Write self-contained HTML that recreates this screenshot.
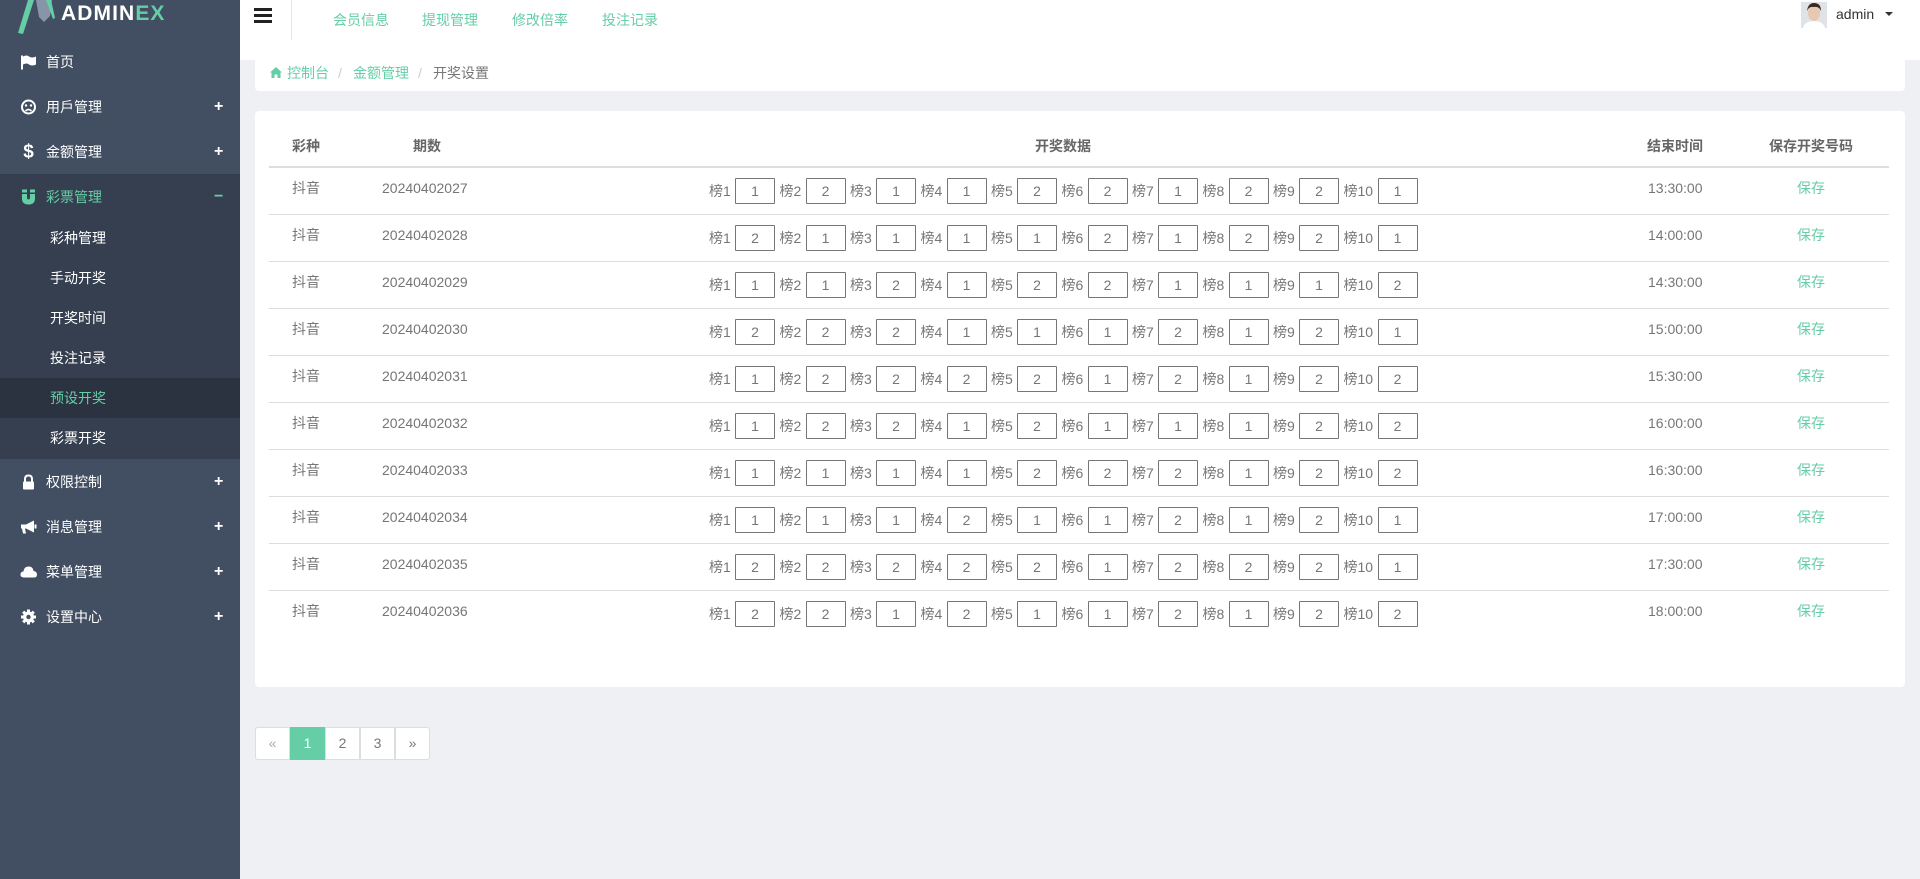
<!DOCTYPE html>
<html><head><meta charset="utf-8">
<style>
*{margin:0;padding:0;box-sizing:border-box}
body{width:1920px;height:879px;overflow:hidden;background:#eff0f4;font-family:"Liberation Sans","Noto Sans CJK SC",sans-serif;font-size:14px;color:#767676;position:relative}
.abs{position:absolute}
#side{left:0;top:0;width:240px;height:879px;background:#424f63}
.mi{position:absolute;left:0;width:240px;height:45px;color:#fff;font-size:14px}
.mi .t{position:absolute;left:46px;top:50%;transform:translateY(-50%);line-height:16px}
.mi .ic{position:absolute;left:20px;top:50%;transform:translateY(-50%);width:17px;height:17px}
.mi .pl{position:absolute;left:214px;top:50%;transform:translateY(-50%);font-weight:bold;font-size:16px}
.si{position:absolute;left:0;width:240px;height:40px;color:#fff;font-size:14px}
.si span{position:absolute;left:50px;top:50%;transform:translateY(-50%)}
.cell{position:absolute;transform:translateY(-50%);white-space:nowrap}
.lb{position:absolute;transform:translateY(-50%);font-size:14px;color:#767676}
.ip{position:absolute;width:40px;height:26px;border:1px solid #767676;background:#fff;text-align:center;line-height:24px;font-size:14px;color:#767676;border-radius:1px}
.hl{position:absolute;left:269px;width:1620px;height:1px;background:#ddd}
.pg{position:absolute;top:727px;width:35px;height:33px;border:1px solid #ddd;background:#fff;text-align:center;line-height:31px;font-size:14px;color:#777}
</style></head><body>
<div id="side" class="abs"></div>
<svg class="abs" style="left:0;top:0" width="240" height="40">
<polygon points="18,33 23,34 34,0 28,0" fill="#65cea7"/>
<polygon points="36,0 52,0 50,16 44,22 39,17" fill="#8894a8"/>
<polygon points="46,0 51,0 55,18 53,19" fill="#65cea7"/>
</svg>
<div class="abs" style="left:61px;top:1px;font-size:21px;font-weight:bold;letter-spacing:1.1px;color:#fff;line-height:26px">ADMIN<span style="color:#65cea7">EX</span></div>

<div class="mi" style="top:39px"><svg class="ic" viewBox="0 0 17 17"><rect x="1" y="2" width="2" height="14" fill="#fff"/><path d="M3 3 Q7 1 9 3 Q12 5 16 3 V11 Q12 13 9 11 Q7 9 3 11Z" fill="#fff"/></svg><span class="t">首页</span></div>
<div class="mi" style="top:84px"><svg class="ic" viewBox="0 0 17 17"><circle cx="8.5" cy="8.5" r="6.5" fill="none" stroke="#fff" stroke-width="2"/><circle cx="6" cy="7" r="1.2" fill="#fff"/><circle cx="11" cy="7" r="1.2" fill="#fff"/><path d="M5.5 12.5 Q8.5 9.5 11.5 12.5" stroke="#fff" stroke-width="1.6" fill="none"/></svg><span class="t">用戶管理</span><span class="pl">+</span></div>
<div class="mi" style="top:129px"><span class="ic" style="font-weight:bold;font-size:19px;line-height:17px;text-align:center">$</span><span class="t">金额管理</span><span class="pl">+</span></div>
<div class="abs" style="left:0;top:174px;width:240px;height:285px;background:#353f4f"></div>
<div class="mi" style="top:174px;color:#65cea7"><svg class="ic" viewBox="0 0 17 17"><path d="M2 1 H7 V9 Q7 11 8.5 11 Q10 11 10 9 V1 H15 V10 Q15 16 8.5 16 Q2 16 2 10Z" fill="#65cea7"/><rect x="2" y="4" width="5" height="1.5" fill="#353f4f"/><rect x="10" y="4" width="5" height="1.5" fill="#353f4f"/></svg><span class="t">彩票管理</span><span class="pl">−</span></div>
<div class="si" style="top:218px"><span>彩种管理</span></div>
<div class="si" style="top:258px"><span>手动开奖</span></div>
<div class="si" style="top:298px"><span>开奖时间</span></div>
<div class="si" style="top:338px"><span>投注记录</span></div>
<div class="si" style="top:378px;background:#2b3340;color:#65cea7"><span>预设开奖</span></div>
<div class="si" style="top:418px"><span>彩票开奖</span></div>
<div class="mi" style="top:459px"><svg class="ic" viewBox="0 0 17 17"><path d="M5 8 V5.5 Q5 2 8.5 2 Q12 2 12 5.5 V8" stroke="#fff" stroke-width="2" fill="none"/><rect x="3" y="8" width="11" height="8" rx="1" fill="#fff"/></svg><span class="t">权限控制</span><span class="pl">+</span></div>
<div class="mi" style="top:504px"><svg class="ic" viewBox="0 0 17 17"><path d="M1 6 H6 L14 2 V14 L6 10 H5 L6 15 H3 L2 10 H1Z" fill="#fff"/><rect x="14.5" y="6" width="2" height="4" fill="#fff"/></svg><span class="t">消息管理</span><span class="pl">+</span></div>
<div class="mi" style="top:549px"><svg class="ic" viewBox="0 0 17 17"><path d="M4 14 Q0 14 0.5 10.5 Q1 8 3.5 8 Q4 3 8.5 3 Q13 3 13.5 7.5 Q17 8 17 11 Q17 14 14 14Z" fill="#fff"/></svg><span class="t">菜单管理</span><span class="pl">+</span></div>
<div class="mi" style="top:594px"><svg class="ic" viewBox="0 0 17 17"><circle cx="8.5" cy="8.5" r="5.5" fill="#fff"/><g stroke="#fff" stroke-width="3"><line x1="8.5" y1="1" x2="8.5" y2="16"/><line x1="1" y1="8.5" x2="16" y2="8.5"/><line x1="3.2" y1="3.2" x2="13.8" y2="13.8"/><line x1="13.8" y1="3.2" x2="3.2" y2="13.8"/></g><circle cx="8.5" cy="8.5" r="2.2" fill="#424f63"/></svg><span class="t">设置中心</span><span class="pl">+</span></div>

<div class="abs" style="left:240px;top:0;width:1680px;height:60px;background:#fff"></div>
<div class="abs" style="left:254px;top:8px;width:18px;height:3px;background:#222"></div>
<div class="abs" style="left:254px;top:14px;width:18px;height:3px;background:#222"></div>
<div class="abs" style="left:254px;top:20px;width:18px;height:3px;background:#222"></div>
<div class="abs" style="left:291px;top:0;width:1px;height:40px;background:#e6e6e6"></div>
<div class="cell" style="left:333px;top:20px;color:#65cea7">会员信息</div>
<div class="cell" style="left:422px;top:20px;color:#65cea7">提现管理</div>
<div class="cell" style="left:512px;top:20px;color:#65cea7">修改倍率</div>
<div class="cell" style="left:602px;top:20px;color:#65cea7">投注记录</div>
<svg class="abs" style="left:1801px;top:2px" width="26" height="26"><rect width="26" height="26" fill="#dfe3e8"/><ellipse cx="13" cy="11" rx="6" ry="8" fill="#e8c8b0"/><path d="M6 9 Q7 1 13 1 Q20 1 20 9 Q18 4 13 5 Q8 4 6 9Z" fill="#3a2a20"/><path d="M2 26 Q4 19 13 19 Q22 19 24 26Z" fill="#fff"/></svg>
<div class="cell" style="left:1836px;top:14px;color:#333">admin</div>
<svg class="abs" style="left:1885px;top:12px" width="8" height="5"><polygon points="0,0 8,0 4,4" fill="#333"/></svg>

<div class="abs" style="left:255px;top:60px;width:1650px;height:31px;background:#fff;border-radius:0 0 4px 4px"></div>
<svg class="abs" style="left:270px;top:67px" width="12" height="11" viewBox="0 0 12 11"><path d="M6 0 L12 5.5 H10.5 V11 H7.5 V7.5 H4.5 V11 H1.5 V5.5 H0Z" fill="#65cea7"/></svg>
<div class="cell" style="left:287px;top:73px;color:#65cea7">控制台</div>
<div class="cell" style="left:338px;top:73px;color:#ccc">/</div>
<div class="cell" style="left:353px;top:73px;color:#65cea7">金额管理</div>
<div class="cell" style="left:418px;top:73px;color:#ccc">/</div>
<div class="cell" style="left:433px;top:73px;color:#777">开奖设置</div>

<div class="abs" style="left:255px;top:111px;width:1650px;height:576px;background:#fff;border-radius:4px"></div>
<div class="cell" style="left:292px;top:146px;font-weight:bold;color:#666">彩种</div>
<div class="cell" style="left:413px;top:146px;font-weight:bold;color:#666">期数</div>
<div class="cell" style="left:1035px;top:146px;font-weight:bold;color:#666">开奖数据</div>
<div class="cell" style="left:1647px;top:146px;font-weight:bold;color:#666">结束时间</div>
<div class="cell" style="left:1769px;top:146px;font-weight:bold;color:#666">保存开奖号码</div>
<div class="hl" style="top:166px;height:2px"></div>
<div id="rows"></div>
<script>
var d=[["20240402027","1211221221","13:30:00"],["20240402028","2111121221","14:00:00"],["20240402029","1121221112","14:30:00"],["20240402030","2221112121","15:00:00"],["20240402031","1222212122","15:30:00"],["20240402032","1221211122","16:00:00"],["20240402033","1111222122","16:30:00"],["20240402034","1112112121","17:00:00"],["20240402035","2222212221","17:30:00"],["20240402036","2212112122","18:00:00"]];
var h="";
for(var i=0;i<d.length;i++){var y=188+47*i;
h+='<div class="cell" style="left:292px;top:'+y+'px">抖音</div>';
h+='<div class="cell" style="left:382px;top:'+y+'px">'+d[i][0]+'</div>';
for(var j=0;j<10;j++){var x=709+j*70.5;
h+='<div class="lb" style="left:'+x+'px;top:'+(y+3)+'px">榜'+(j+1)+'</div>';
h+='<div class="ip" style="left:'+(x+(j==9?34:26))+'px;top:'+(y-10)+'px">'+d[i][1][j]+'</div>';}
h+='<div class="cell" style="left:1648px;top:'+y+'px">'+d[i][2]+'</div>';
h+='<div class="cell" style="left:1797px;top:'+y+'px;color:#65cea7">保存</div>';
if(i<9)h+='<div class="hl" style="top:'+(214+47*i)+'px"></div>';}
document.getElementById("rows").innerHTML=h;
</script>
<div class="pg" style="left:255px;border-radius:3px 0 0 3px;color:#aaa">«</div>
<div class="pg" style="left:290px;background:#65cea7;border-color:#65cea7;color:#fff">1</div>
<div class="pg" style="left:325px">2</div>
<div class="pg" style="left:360px">3</div>
<div class="pg" style="left:395px;border-radius:0 3px 3px 0">»</div>
</body></html>
